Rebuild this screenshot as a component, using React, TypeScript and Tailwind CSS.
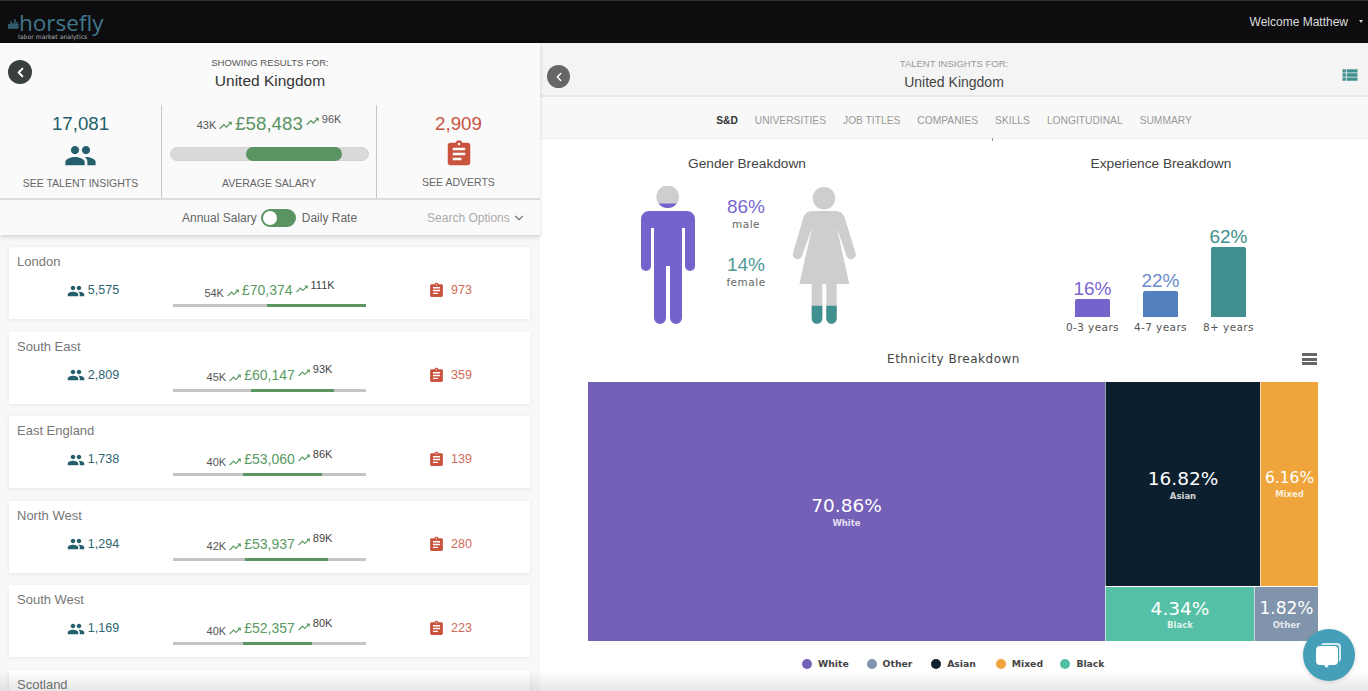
import { ChevronDown, ChevronLeft } from "lucide-react";
import { MdAssignment, MdPeople, MdTrendingUp, MdViewList } from "react-icons/md";

const regions = [
  { name: "London", people: "5,575", min: "54K", salary: "£70,374", max: "111K", from: 94, to: 193, adverts: "973" },
  { name: "South East", people: "2,809", min: "45K", salary: "£60,147", max: "93K", from: 78, to: 161, adverts: "359" },
  { name: "East England", people: "1,738", min: "40K", salary: "£53,060", max: "86K", from: 70, to: 149, adverts: "139" },
  { name: "North West", people: "1,294", min: "42K", salary: "£53,937", max: "89K", from: 72, to: 155, adverts: "280" },
  { name: "South West", people: "1,169", min: "40K", salary: "£52,357", max: "80K", from: 70, to: 139, adverts: "223" },
];

const tabs = ["UNIVERSITIES", "JOB TITLES", "COMPANIES", "SKILLS", "LONGITUDINAL", "SUMMARY"];

const legend = [
  { label: "White", dot: "bg-[#7560b8]" },
  { label: "Other", dot: "bg-[#8095ab]" },
  { label: "Asian", dot: "bg-[#0c1f2e]" },
  { label: "Mixed", dot: "bg-[#f0a53c]" },
  { label: "Black", dot: "bg-[#55c0a6]" },
];

const manPath =
  "M9 25H47a8 8 0 0 1 8 8V80a5 5 0 0 1-10 0V42H42V132a6 6 0 0 1-12 0V80H26V132a6 6 0 0 1-12 0V42H11V80a5 5 0 0 1-10 0V33a8 8 0 0 1 8-8Z";
const womanPath =
  "M22 25H46C50 25 53 27 54.5 31L65.5 67a4.7 4.7 0 0 1-9 3L47 42 59.3 98H46.7V132.5a5.2 5.2 0 0 1-10.4 0V98H32.3V132.5a5.3 5.3 0 0 1-10.6 0V98H9.3L22 42 12 70a4.7 4.7 0 0 1-9-3L13.5 31C15 27 18 25 22 25Z";

function Man() {
  return (
    <svg width="56" height="140" viewBox="0 0 56 140" className="shrink-0">
      <defs>
        <clipPath id="manHead">
          <rect x="0" y="17.5" width="56" height="10" />
        </clipPath>
      </defs>
      <circle cx="27.7" cy="10.7" r="11.3" fill="#cfcdd0" />
      <circle cx="27.7" cy="10.7" r="11.3" fill="#7364cc" clipPath="url(#manHead)" />
      <path d={manPath} fill="#7364cc" />
    </svg>
  );
}

function Woman() {
  return (
    <svg width="69" height="140" viewBox="0 0 69 140" className="-ml-[3px] shrink-0">
      <defs>
        <clipPath id="womanFeet">
          <rect x="0" y="119.7" width="69" height="21" />
        </clipPath>
      </defs>
      <circle cx="34" cy="12.3" r="11.3" fill="#cfcdd0" />
      <path d={womanPath} fill="#cfcdd0" />
      <path d={womanPath} fill="#3f908e" clipPath="url(#womanFeet)" />
    </svg>
  );
}

function Logo() {
  return (
    <div className="ml-[8px] mt-[11px] w-[100px] font-['Open_Sans',sans-serif]">
      <div className="flex items-end">
        <svg width="11" height="14" viewBox="0 0 11 14" className="mb-[4px] shrink-0">
          <path d="M1 8v5M3 5v8M5 7v6M7 3v10M9 6v7" stroke="#3f7488" strokeWidth="1.2" />
          <path d="M0 9h11M0 11h11" stroke="#3f7488" strokeWidth="0.8" />
        </svg>
        <span className="text-[22.5px] font-medium leading-[22px] text-[#41778c]">horsefly</span>
      </div>
      <div className="pl-[10px] font-['DejaVu_Sans',sans-serif] text-[6.2px] leading-[6px] text-[#a8b0b5]">
        labor market analytics
      </div>
    </div>
  );
}

function Card({ r }: { r: (typeof regions)[number] }) {
  return (
    <div className="h-[72px] shrink-0 bg-white pt-[7px] shadow-[0_1px_4px_rgba(0,0,0,0.07)]">
      <div className="pl-[8px] text-[13px] leading-[16px] text-[#777]">{r.name}</div>
      <div className="mt-[7px] flex">
        <div className="flex h-[28px] w-[164px] items-center justify-center gap-[3px] pl-[4px] pb-[1px] text-[12.5px] text-[#2d6672]">
          <MdPeople size={18} className="text-[#245f6b]" />
          {r.people}
        </div>
        <div className="w-[193px]">
          <div className="flex h-[27px] items-center justify-center text-[#5a9a63]">
            <span className="mt-[5px] text-[11px] text-[#555]">{r.min}</span>
            <MdTrendingUp size={14} className="mx-[2px] mt-[5px]" />
            <span className="text-[14px]">{r.salary}</span>
            <MdTrendingUp size={14} className="mx-[2px] mb-[4px]" />
            <span className="mb-[11px] text-[11px] text-[#444]">{r.max}</span>
          </div>
          <div className="relative h-[3px] bg-[#c4c4c4]">
            <div
              className="absolute top-0 h-[3px] bg-[#5a9463]"
              style={{ left: r.from, width: r.to - r.from }}
            />
          </div>
        </div>
        <div className="flex h-[28px] flex-1 items-center justify-center gap-[6px] pl-[4px] pb-[1px] text-[12.5px] text-[#cf6a58]">
          <MdAssignment size={17} className="text-[#c9533f]" />
          {r.adverts}
        </div>
      </div>
    </div>
  );
}

function LeftPanel() {
  return (
    <div className="flex h-full w-[540px] shrink-0 flex-col bg-[#f8f8f8]">
      <div className="relative z-10 bg-[#fafafa] shadow-[0_2px_4px_rgba(0,0,0,0.15)]">
        <div className="relative h-[62px] pt-[13px] text-center">
          <button className="absolute left-[8px] top-[17px] flex h-[24px] w-[24px] items-center justify-center rounded-full bg-[#3a3f40] text-white">
            <ChevronLeft size={15} strokeWidth={3} />
          </button>
          <div className="text-[9.5px] leading-[13px] text-[#555]">SHOWING RESULTS FOR:</div>
          <div className="mt-[2px] text-[15.5px] leading-[20px] text-[#333]">United Kingdom</div>
        </div>
        <div className="flex h-[95px] border-b-2 border-[#dcdcdc]">
          <div className="flex w-[161px] flex-col items-center pt-[8px]">
            <div className="text-[18.7px] leading-[22px] text-[#245f6b]">17,081</div>
            <MdPeople size={33} className="mt-[4px] text-[#245f6b]" />
            <div className="mt-[4px] text-[10.5px] leading-[14px] text-[#666]">SEE TALENT INSIGHTS</div>
          </div>
          <div className="flex w-[216px] flex-col items-center border-x border-[#c8c8c8] pt-[8px]">
            <div className="flex h-[22px] items-center text-[#5a9463]">
              <span className="mt-[3px] text-[11px] text-[#555]">43K</span>
              <MdTrendingUp size={15} className="mx-[2px] mt-[3px]" />
              <span className="text-[18.7px]">£58,483</span>
              <MdTrendingUp size={15} className="mx-[2px] mb-[5px]" />
              <span className="mb-[9px] text-[11px] text-[#555]">96K</span>
            </div>
            <div className="relative mt-[12px] h-[14px] w-[199px] rounded-full border border-[#d2d2d2] bg-[#dadada]">
              <div className="absolute left-[75px] top-[-1px] h-[14px] w-[96px] rounded-full bg-[#5a9463]" />
            </div>
            <div className="mt-[15px] text-[10.5px] leading-[14px] text-[#666]">AVERAGE SALARY</div>
          </div>
          <div className="flex flex-1 flex-col items-center pt-[8px]">
            <div className="text-[18.7px] leading-[22px] text-[#c9533f]">2,909</div>
            <MdAssignment size={30} className="mt-[4px] text-[#c9533f]" />
            <div className="mt-[6px] text-[10.5px] leading-[14px] text-[#666]">SEE ADVERTS</div>
          </div>
        </div>
        <div className="flex h-[35px] items-center text-[12px] text-[#666]">
          <span className="ml-[182px]">Annual Salary</span>
          <div className="ml-[4px] flex h-[18px] w-[35px] items-center rounded-full bg-[#5a9463] pl-[2px]">
            <div className="h-[14px] w-[14px] rounded-full bg-white" />
          </div>
          <span className="ml-[6px]">Daily Rate</span>
          <span className="ml-[70px] text-[#aaa]">Search Options</span>
          <ChevronDown size={14} className="ml-[2px] text-[#777]" />
        </div>
      </div>
      <div className="flex flex-col gap-[12.5px] overflow-hidden pl-[9px] pr-[10px] pt-[12px]">
        {regions.map((r) => (
          <Card key={r.name} r={r} />
        ))}
        <div className="h-[72px] shrink-0 bg-white pt-[7px] pl-[8px] text-[13px] leading-[16px] text-[#777] shadow-[0_1px_4px_rgba(0,0,0,0.07)]">
          Scotland
        </div>
      </div>
    </div>
  );
}

function Breakdown() {
  return (
    <div className="grid grid-cols-2">
      <div className="flex flex-col">
        <div className="text-center text-[13.7px] leading-[18px] text-[#444]">Gender Breakdown</div>
        <div className="mt-[13px] flex pl-[100px]">
          <Man />
          <div className="ml-[3px] w-[94px] text-center font-['DejaVu_Sans',sans-serif]">
            <div className="mt-[10px] font-['Liberation_Sans',sans-serif] text-[19px] leading-[22px] text-[#7a68d0]">86%</div>
            <div className="-mt-[1px] text-[10.5px] leading-[14px] tracking-[0.5px] text-[#666]">male</div>
            <div className="mt-[23px] font-['Liberation_Sans',sans-serif] text-[19px] leading-[22px] text-[#4d9c98]">14%</div>
            <div className="-mt-[1px] text-[10.5px] leading-[14px] tracking-[0.5px] text-[#666]">female</div>
          </div>
          <Woman />
        </div>
      </div>
      <div className="flex flex-col">
        <div className="text-center text-[13.7px] leading-[18px] text-[#444]">Experience Breakdown</div>
        <div className="mt-[13px] flex h-[150px] items-end justify-center pb-[1px] pr-[1px]">
          <div className="flex w-[68px] flex-col items-center">
            <div className="-mb-[1px] text-[19px] leading-[22px] text-[#7a68d0]">16%</div>
            <div className="h-[18px] w-[35px] rounded-t-[2px] bg-[#7364cc]" />
            <div className="mt-[2px] font-['DejaVu_Sans',sans-serif] text-[10.5px] leading-[16px] tracking-[0.4px] text-[#555]">0-3 years</div>
          </div>
          <div className="flex w-[68px] flex-col items-center">
            <div className="-mb-[1px] text-[19px] leading-[22px] text-[#6a8ccc]">22%</div>
            <div className="h-[26px] w-[35px] rounded-t-[2px] bg-[#5180bd]" />
            <div className="mt-[2px] font-['DejaVu_Sans',sans-serif] text-[10.5px] leading-[16px] tracking-[0.4px] text-[#555]">4-7 years</div>
          </div>
          <div className="flex w-[68px] flex-col items-center">
            <div className="-mb-[1px] text-[19px] leading-[22px] text-[#3f908e]">62%</div>
            <div className="h-[70px] w-[35px] rounded-t-[2px] bg-[#3f908e]" />
            <div className="mt-[2px] font-['DejaVu_Sans',sans-serif] text-[10.5px] leading-[16px] tracking-[0.4px] text-[#555]">8+ years</div>
          </div>
        </div>
      </div>
    </div>
  );
}

function Tile({ value, label, valueSize, className }: { value: string; label: string; valueSize: string; className: string }) {
  return (
    <div className={`flex shrink-0 flex-col items-center justify-center text-white ${className}`}>
      <div className={valueSize}>{value}</div>
      <div className="text-[8.5px] font-bold leading-[11px] opacity-80">{label}</div>
    </div>
  );
}

function Treemap() {
  return (
    <div className="mx-[48px] flex h-[259px] w-[730px] font-['DejaVu_Sans',sans-serif]">
      <Tile value="70.86%" label="White" valueSize="text-[18.5px] leading-[24px]" className="w-[517px] bg-[#7560b8]" />
      <div className="flex w-[213px] flex-col">
        <div className="flex h-[204px]">
          <Tile value="16.82%" label="Asian" valueSize="text-[18.5px] leading-[24px]" className="w-[155px] border-l border-white/60 bg-[#0c1f2e]" />
          <Tile value="6.16%" label="Mixed" valueSize="text-[15.5px] leading-[21px]" className="w-[58px] border-l border-white/60 bg-[#f0a53c]" />
        </div>
        <div className="flex flex-1 border-t border-white/70">
          <Tile value="4.34%" label="Black" valueSize="text-[18.5px] leading-[23px]" className="w-[149px] border-l border-white/60 bg-[#55c0a6]" />
          <Tile value="1.82%" label="Other" valueSize="text-[17px] leading-[23px]" className="w-[64px] border-l border-white/60 bg-[#8095ab]" />
        </div>
      </div>
    </div>
  );
}

function RightPanel() {
  return (
    <div className="flex h-full flex-1 flex-col bg-white">
      <div className="relative h-[54px] border-b-2 border-[#e8e8e8] bg-[#f4f4f4] pt-[14px] text-center">
        <button className="absolute left-[7px] top-[22px] flex h-[23px] w-[23px] items-center justify-center rounded-full bg-[#666] text-white">
          <ChevronLeft size={14} strokeWidth={2.5} />
        </button>
        <div className="text-[9.5px] leading-[13px] text-[#999]">TALENT INSIGHTS FOR:</div>
        <div className="mt-[2px] text-[14px] leading-[20px] text-[#444]">United Kingdom</div>
        <MdViewList size={20} className="absolute right-[8px] top-[22px] text-[#3f908e]" />
      </div>
      <div className="relative flex h-[42px] items-center justify-center gap-[17px] border-b border-[#eee] bg-[#f8f8f8] pt-[7px] text-[10.25px] text-[#999]">
        <span className="font-bold text-[#333]">S&amp;D</span>
        {tabs.map((t) => (
          <span key={t}>{t}</span>
        ))}
        <span className="absolute left-[452px] top-[41px] h-[3px] w-px bg-[#999]" />
      </div>
      <div className="pt-[16px]">
        <Breakdown />
        <div className="relative mt-[14px] h-[32px] pr-[1px] text-center font-['DejaVu_Sans',sans-serif] text-[12px] leading-[18px] tracking-[0.5px] text-[#444]">
          Ethnicity Breakdown
          <div className="absolute right-[51px] top-[3px] flex w-[15px] flex-col gap-[1.5px]">
            <div className="h-[3px] bg-[#666]" />
            <div className="h-[3px] bg-[#666]" />
            <div className="h-[3px] bg-[#666]" />
          </div>
        </div>
        <Treemap />
        <div className="mt-[16px] flex pl-[262px] font-['DejaVu_Sans',sans-serif] text-[9.25px] font-bold leading-[14px] text-[#444]">
          {legend.map((l) => (
            <div key={l.label} className="flex w-[64.6px] items-center gap-[6px]">
              <span className={`h-[10px] w-[10px] rounded-full ${l.dot}`} />
              {l.label}
            </div>
          ))}
        </div>
      </div>
    </div>
  );
}

export default function App() {
  return (
    <div className="relative flex h-[691px] w-[1368px] flex-col overflow-hidden font-['Liberation_Sans',sans-serif]">
      <header className="flex h-[43px] shrink-0 justify-between border-t border-[#333] bg-[#0d0d0f]">
        <Logo />
        <div className="mr-[5px] mt-[14px] flex items-start text-[12px] leading-[14px] text-[#ddd]">
          Welcome Matthew
          <span className="ml-[11px] mt-[5px] h-0 w-0 border-x-[2.5px] border-t-[3px] border-x-transparent border-t-[#ccc]" />
        </div>
      </header>
      <div className="flex min-h-0 flex-1">
        <LeftPanel />
        <RightPanel />
      </div>
      <button className="absolute left-[1303px] top-[629px] z-20 flex h-[52px] w-[52px] items-center justify-center rounded-full bg-[#469fb9] shadow-[0_1px_4px_rgba(0,0,0,0.15)]">
        <svg width="28" height="28" viewBox="0 0 28 28">
          <path d="M9 2h13a4 4 0 0 1 4 4v12a4 4 0 0 1-2 3V7a3 3 0 0 0-3-3H6a4 4 0 0 1 3-2Z" fill="#d5ecf3" />
          <path d="M5 5h14a4 4 0 0 1 4 4v11a4 4 0 0 1-4 4h-5l-2.5 3L9 24H5a4 4 0 0 1-4-4V9a4 4 0 0 1 4-4Z" fill="#fff" />
        </svg>
      </button>
      <div className="pointer-events-none absolute bottom-0 left-0 right-0 z-10 h-[20px] bg-gradient-to-t from-black/10 to-transparent" />
    </div>
  );
}
